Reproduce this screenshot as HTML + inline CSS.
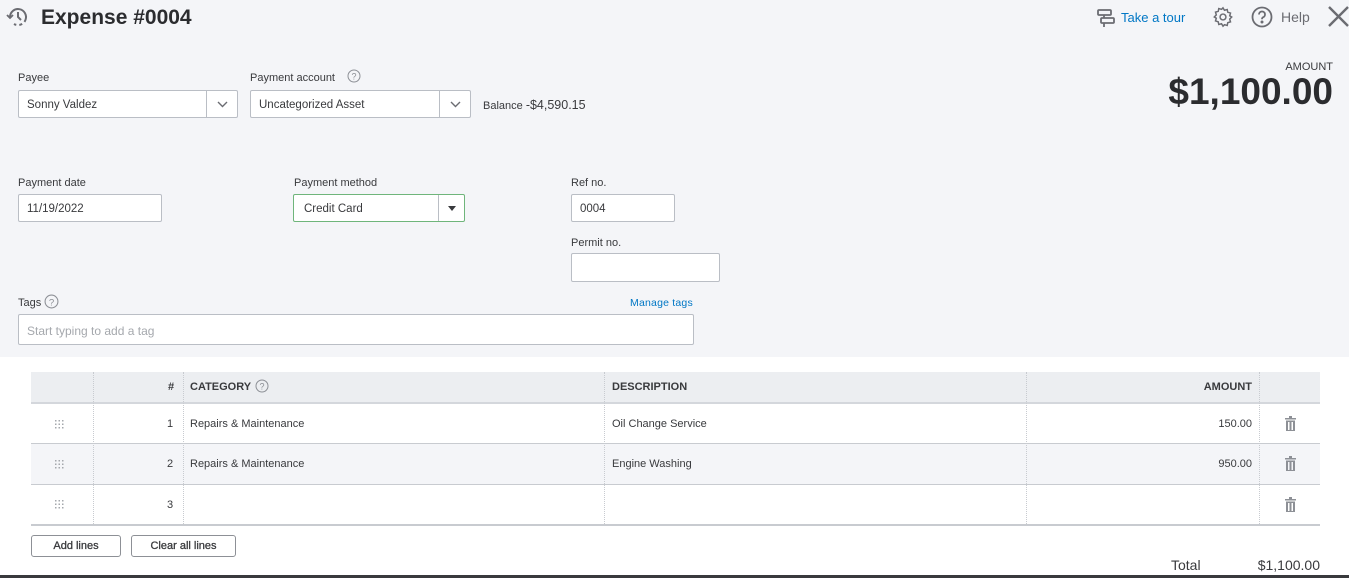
<!DOCTYPE html>
<html><head><style>
*{margin:0;padding:0;box-sizing:border-box}
body{width:1349px;height:578px;overflow:hidden;background:#fff;font-family:"Liberation Sans",Arial,sans-serif;color:#393a3d;position:relative}
.a{position:absolute}
.top{left:0;top:0;width:1349px;height:357px;background:#f4f5f8}
.lbl{font-size:11px;color:#393a3d}
.inp{background:#fff;border:1px solid #babec5;border-radius:2px;font-size:11.5px;padding-left:8px;padding-top:2px;display:flex;align-items:center}
.dd{position:absolute;right:0;top:0;bottom:0;width:31px;border-left:1px solid #babec5}
.hd{font-size:11px;font-weight:bold}
.vl{position:absolute;top:372px;height:152px;border-left:1px dotted #c8cbd0}
.btn{border:1px solid #8d9096;border-radius:3px;background:#fff;font-size:11px;display:flex;align-items:center;justify-content:center;height:22px;top:535px;-webkit-text-stroke:0.3px #393a3d}
.c{font-size:11px}
</style></head><body>
<div class="a top"></div>
<svg class="a" style="left:6px;top:6px" width="25" height="22" viewBox="0 0 25 22"><path d="M4 11a8 8 0 1 1 4 7" fill="none" stroke="#6b6c72" stroke-width="2" stroke-dasharray="30 3 3 3"/><path d="M12 6v5l3 3" fill="none" stroke="#6b6c72" stroke-width="2"/><path d="M1 9l3 3 3-3" fill="none" stroke="#6b6c72" stroke-width="1.8"/></svg>
<div class="a" style="left:41px;top:6px;font-size:21px;font-weight:bold;color:#2b2c2f">Expense #0004</div>
<svg class="a" style="left:1096px;top:8px" width="20" height="20" viewBox="0 0 20 20" fill="none" stroke="#6b6c72" stroke-width="1.8"><rect x="2" y="2" width="13" height="5" rx="1"/><rect x="5" y="10" width="13" height="5" rx="1"/><path d="M8 7v3M8 15v4"/></svg>
<div class="a" style="left:1121px;top:10px;font-size:13px;color:#0077c5">Take a tour</div>
<svg class="a" style="left:1212px;top:6px" width="22" height="22" viewBox="0 0 24 24" fill="none" stroke="#6b6c72" stroke-width="1.6"><circle cx="12" cy="12" r="3.2"/><path d="M12 2l1.6 2.6 3-0.8 0.6 3 3 0.9-0.9 3L21.5 12l-2.2 2.3.9 3-3 .9-.6 3-3-.8L12 22l-1.6-2.6-3 .8-.6-3-3-.9.9-3L2.5 12l2.2-2.3-.9-3 3-.9.6-3 3 .8z"/></svg>
<svg class="a" style="left:1251px;top:6px" width="22" height="22" viewBox="0 0 22 22" fill="none" stroke="#6b6c72" stroke-width="1.8"><circle cx="11" cy="11" r="9.5"/><path d="M8 8.5a3 3 0 1 1 4 2.8c-.8.4-1 1-1 2"/><circle cx="11" cy="16" r=".6" fill="#6b6c72"/></svg>
<div class="a" style="left:1281px;top:9px;font-size:14px;color:#6b6c72">Help</div>
<svg class="a" style="left:1328px;top:6px" width="21" height="21" viewBox="0 0 21 21" stroke="#6b6c72" stroke-width="2.4"><path d="M1 1l19 19M20 1L1 20"/></svg>

<div class="a" style="right:16px;top:61px;font-size:11px;color:#393a3d">AMOUNT</div>
<div class="a" style="right:16px;top:71px;font-size:37px;font-weight:bold;color:#2b2c2f">$1,100.00</div>

<div class="a lbl" style="left:18px;top:72px">Payee</div>
<div class="a inp" style="left:18px;top:90px;width:220px;height:28px">Sonny Valdez<div class="dd"><svg style="margin:10px 0 0 10px" width="11" height="7" viewBox="0 0 11 7"><path d="M1 1l4.5 4.5L10 1" fill="none" stroke="#6b6c72" stroke-width="1.4"/></svg></div></div>
<div class="a lbl" style="left:250px;top:72px">Payment account</div>
<svg class="a" style="left:347px;top:69px" width="14" height="14" viewBox="0 0 14 14" fill="none" stroke="#8d9096"><circle cx="7" cy="7" r="6"/><text x="7" y="10.5" font-size="9" text-anchor="middle" fill="#8d9096" stroke="none" font-family="Liberation Sans">?</text></svg>
<div class="a inp" style="left:250px;top:90px;width:221px;height:28px">Uncategorized Asset<div class="dd"><svg style="margin:10px 0 0 10px" width="11" height="7" viewBox="0 0 11 7"><path d="M1 1l4.5 4.5L10 1" fill="none" stroke="#6b6c72" stroke-width="1.4"/></svg></div></div>
<div class="a" style="left:483px;top:98px;font-size:11px">Balance <span style="font-size:12.5px">-$4,590.15</span></div>

<div class="a lbl" style="left:18px;top:177px">Payment date</div>
<div class="a inp" style="left:18px;top:194px;width:144px;height:28px">11/19/2022</div>
<div class="a lbl" style="left:294px;top:177px">Payment method</div>
<div class="a inp" style="left:293px;top:194px;width:172px;height:28px;border-color:#6fb57b;padding-left:10px">Credit Card<div class="dd" style="width:26px"><svg style="margin:11px 0 0 9px" width="8" height="5" viewBox="0 0 8 5"><path d="M0 0h8L4 5z" fill="#393a3d"/></svg></div></div>
<div class="a lbl" style="left:571px;top:177px">Ref no.</div>
<div class="a inp" style="left:571px;top:194px;width:104px;height:28px">0004</div>
<div class="a lbl" style="left:571px;top:237px">Permit no.</div>
<div class="a inp" style="left:571px;top:253px;width:149px;height:29px"></div>
<div class="a lbl" style="left:18px;top:297px">Tags</div>
<svg class="a" style="left:44px;top:294px" width="15" height="15" viewBox="0 0 14 14" fill="none" stroke="#8d9096"><circle cx="7" cy="7" r="6"/><text x="7" y="10.5" font-size="9" text-anchor="middle" fill="#8d9096" stroke="none" font-family="Liberation Sans">?</text></svg>
<div class="a" style="left:630px;top:297px;font-size:10.5px;color:#0077c5;letter-spacing:0.2px">Manage tags</div>
<div class="a inp" style="left:18px;top:314px;width:676px;height:31px;color:#a5a8ad;font-size:12px">Start typing to add a tag</div>

<div class="a" style="left:31px;top:372px;width:1289px;height:30px;background:#eceef1"></div>
<div class="a" style="left:31px;top:402px;width:1289px;height:2px;background:#d4d7dc"></div>
<div class="a" style="left:31px;top:443px;width:1289px;height:1px;background:#c8cbd0"></div>
<div class="a" style="left:31px;top:444px;width:1289px;height:40px;background:#f4f5f8"></div>
<div class="a" style="left:31px;top:484px;width:1289px;height:1px;background:#c8cbd0"></div>
<div class="a" style="left:31px;top:524px;width:1289px;height:2px;background:#c8cbd0"></div>
<div class="vl" style="left:93px"></div><div class="vl" style="left:183px"></div><div class="vl" style="left:604px"></div><div class="vl" style="left:1026px"></div><div class="vl" style="left:1259px"></div>

<div class="a hd" style="left:168px;top:381px">#</div>
<div class="a hd" style="left:190px;top:381px">CATEGORY</div>
<svg class="a" style="left:255px;top:379px" width="14" height="14" viewBox="0 0 14 14" fill="none" stroke="#8d9096"><circle cx="7" cy="7" r="6"/><text x="7" y="10.5" font-size="9" text-anchor="middle" fill="#8d9096" stroke="none" font-family="Liberation Sans">?</text></svg>
<div class="a hd" style="left:612px;top:381px">DESCRIPTION</div>
<div class="a hd" style="right:97px;top:381px">AMOUNT</div>

<svg class="a" style="left:55px;top:420px" width="9" height="9" viewBox="0 0 9 9" fill="#a5a8ad"><rect x="0" y="0" width="1.5" height="1.5"/><rect x="3.5" y="0" width="1.5" height="1.5"/><rect x="7" y="0" width="1.5" height="1.5"/><rect x="0" y="3.5" width="1.5" height="1.5"/><rect x="3.5" y="3.5" width="1.5" height="1.5"/><rect x="7" y="3.5" width="1.5" height="1.5"/><rect x="0" y="7" width="1.5" height="1.5"/><rect x="3.5" y="7" width="1.5" height="1.5"/><rect x="7" y="7" width="1.5" height="1.5"/></svg>
<svg class="a" style="left:55px;top:460px" width="9" height="9" viewBox="0 0 9 9" fill="#a5a8ad"><rect x="0" y="0" width="1.5" height="1.5"/><rect x="3.5" y="0" width="1.5" height="1.5"/><rect x="7" y="0" width="1.5" height="1.5"/><rect x="0" y="3.5" width="1.5" height="1.5"/><rect x="3.5" y="3.5" width="1.5" height="1.5"/><rect x="7" y="3.5" width="1.5" height="1.5"/><rect x="0" y="7" width="1.5" height="1.5"/><rect x="3.5" y="7" width="1.5" height="1.5"/><rect x="7" y="7" width="1.5" height="1.5"/></svg>
<svg class="a" style="left:55px;top:500px" width="9" height="9" viewBox="0 0 9 9" fill="#a5a8ad"><rect x="0" y="0" width="1.5" height="1.5"/><rect x="3.5" y="0" width="1.5" height="1.5"/><rect x="7" y="0" width="1.5" height="1.5"/><rect x="0" y="3.5" width="1.5" height="1.5"/><rect x="3.5" y="3.5" width="1.5" height="1.5"/><rect x="7" y="3.5" width="1.5" height="1.5"/><rect x="0" y="7" width="1.5" height="1.5"/><rect x="3.5" y="7" width="1.5" height="1.5"/><rect x="7" y="7" width="1.5" height="1.5"/></svg>
<div class="a c" style="left:167px;top:418px">1</div>
<div class="a c" style="left:167px;top:458px">2</div>
<div class="a c" style="left:167px;top:499px">3</div>
<div class="a c" style="left:190px;top:418px">Repairs &amp; Maintenance</div>
<div class="a c" style="left:190px;top:458px">Repairs &amp; Maintenance</div>
<div class="a c" style="left:612px;top:418px">Oil Change Service</div>
<div class="a c" style="left:612px;top:458px">Engine Washing</div>
<div class="a c" style="right:97px;top:418px">150.00</div>
<div class="a c" style="right:97px;top:458px">950.00</div>
<svg class="a" style="left:1285px;top:416px" width="11" height="15" viewBox="0 0 11 15" fill="#8d9096"><rect x="0" y="2" width="11" height="1.5"/><rect x="4" y="0" width="3" height="2"/><path d="M1 4.5h9V15H1z M3 6v8h1.5V6z M6.5 6v8H8V6z" fill-rule="evenodd"/></svg>
<svg class="a" style="left:1285px;top:456px" width="11" height="15" viewBox="0 0 11 15" fill="#8d9096"><rect x="0" y="2" width="11" height="1.5"/><rect x="4" y="0" width="3" height="2"/><path d="M1 4.5h9V15H1z M3 6v8h1.5V6z M6.5 6v8H8V6z" fill-rule="evenodd"/></svg>
<svg class="a" style="left:1285px;top:497px" width="11" height="15" viewBox="0 0 11 15" fill="#8d9096"><rect x="0" y="2" width="11" height="1.5"/><rect x="4" y="0" width="3" height="2"/><path d="M1 4.5h9V15H1z M3 6v8h1.5V6z M6.5 6v8H8V6z" fill-rule="evenodd"/></svg>

<div class="a btn" style="left:31px;width:90px">Add lines</div>
<div class="a btn" style="left:131px;width:105px">Clear all lines</div>
<div class="a" style="left:1171px;top:557px;font-size:14px">Total</div>
<div class="a" style="right:29px;top:557px;font-size:14px">$1,100.00</div>
<div class="a" style="left:0;top:575px;width:1349px;height:3px;background:#393a3d"></div>
</body></html>
